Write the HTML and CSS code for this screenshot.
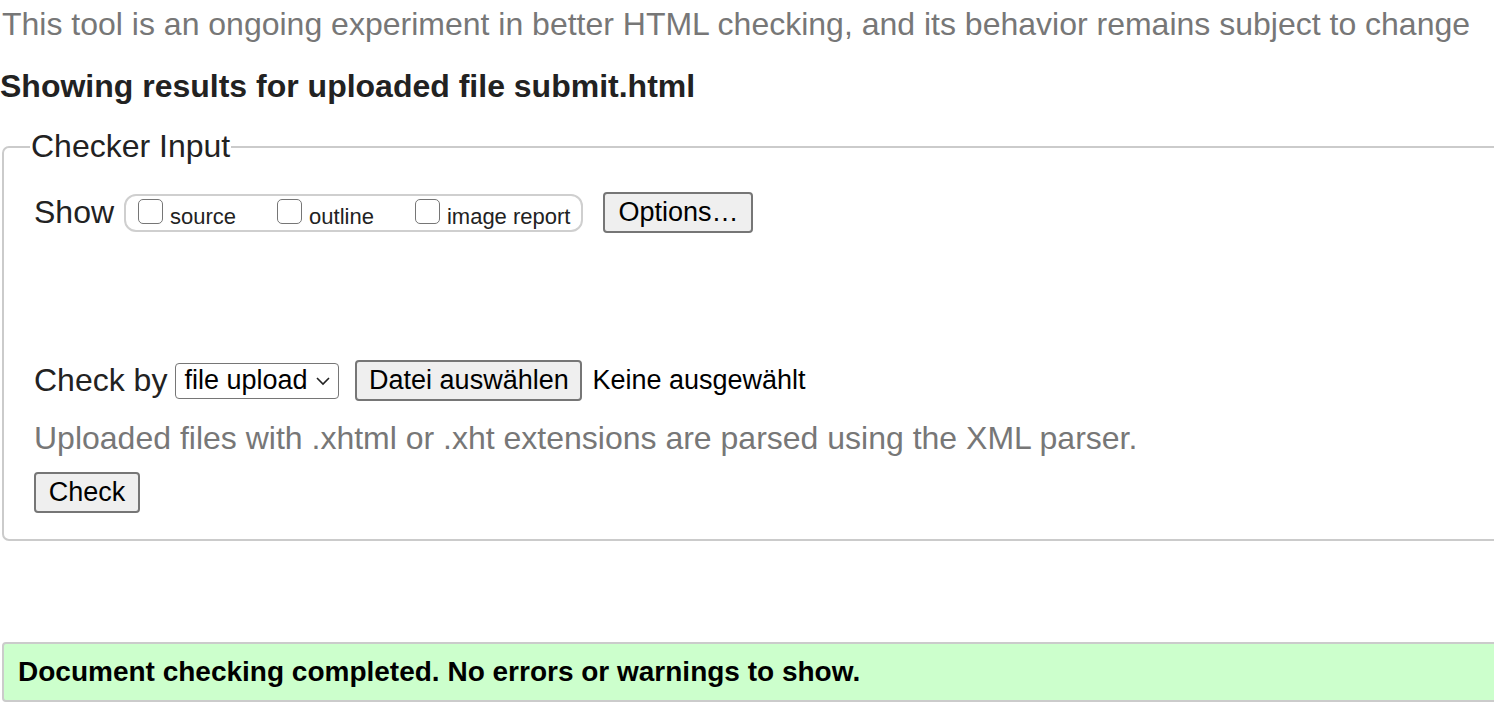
FILE: index.html
```html
<!DOCTYPE html>
<html lang="en">
<head>
<meta charset="utf-8">
<title>Nu Html Checker</title>
<link rel="stylesheet" href="styles.css">
</head>
<body>
<div class="page">
  <p class="notice">This tool is an ongoing experiment in better HTML checking, and its behavior remains subject to change</p>
  <h2 class="results">Showing results for uploaded file submit.html</h2>
  <fieldset class="checker">
    <legend class="legend">Checker Input</legend>
    <div class="show-row">
      <span class="row-label">Show</span>
      <div class="show-box">
        <label class="opt"><input type="checkbox" class="cb"><span>source</span></label>
        <label class="opt"><input type="checkbox" class="cb"><span>outline</span></label>
        <label class="opt"><input type="checkbox" class="cb"><span>image report</span></label>
      </div>
      <button class="btn btn-options" type="button">Options…</button>
    </div>
    <div class="check-row">
      <span class="row-label">Check by</span>
      <div class="select">
        <span>file upload</span>
        <svg class="chev" width="16" height="10" viewBox="0 0 16 10"><path d="M2 2 L8 8 L14 2" fill="none" stroke="#222" stroke-width="1.6"/></svg>
      </div>
      <button class="btn btn-file" type="button">Datei auswählen</button>
      <span class="nofile">Keine ausgewählt</span>
    </div>
    <p class="hint">Uploaded files with .xhtml or .xht extensions are parsed using the XML parser.</p>
    <button class="btn btn-check" type="button">Check</button>
  </fieldset>
  <div class="success">Document checking completed. No errors or warnings to show.</div>
</div>
</body>
</html>
```
FILE: styles.css
```css
html, body {
  margin: 0;
  padding: 0;
  background: #fff;
  overflow: hidden;
}
body {
  font-family: "Liberation Sans", Arial, sans-serif;
  color: #222;
}
.page {
  width: 1520px;
  padding: 0 0 0 2px;
}
.notice {
  margin: 0;
  padding-top: 6px;
  font-size: 32px;
  line-height: 37px;
  color: #777;
  white-space: nowrap;
}
.results {
  margin: 25px 0 0 -2px;
  font-size: 32px;
  line-height: 37px;
  font-weight: bold;
  color: #222;
}
.checker {
  margin: 23px 0 0 0;
  padding: 0 0 26px 30px;
  border: 2px solid #cbcbcb;
  border-radius: 7px;
  min-width: 0;
}
.legend {
  font-size: 32px;
  line-height: 37px;
  padding: 0 1px;
  margin-left: -4px;
  color: #222;
}
.show-row {
  display: flex;
  align-items: center;
  height: 41px;
  margin-top: 27px;
}
.row-label {
  font-size: 32px;
  line-height: 37px;
  color: #222;
}
.show-box {
  display: flex;
  align-items: center;
  margin-left: 10px;
  height: 38px;
  box-sizing: border-box;
  padding: 0 11px 0 12px;
  border: 2px solid #cfcfcf;
  border-radius: 12px;
  gap: 41px;
}
.opt {
  display: flex;
  align-items: flex-end;
  font-size: 22px;
  line-height: 26px;
  color: #222;
}
.opt span {
  position: relative;
  top: 4px;
}
.cb {
  -webkit-appearance: none;
  appearance: none;
  width: 25px;
  height: 25px;
  margin: 0 7px 0 0;
  border: 1.5px solid #767676;
  border-radius: 5px;
  background: #fff;
  position: relative;
  top: -2px;
}
.btn {
  font-family: "Liberation Sans", Arial, sans-serif;
  font-size: 27px;
  color: #000;
  background: #efefef;
  border: 2px solid #767676;
  border-radius: 4px;
  padding: 0 13px;
  height: 41px;
  box-sizing: border-box;
}
.btn-options {
  margin-left: 20px;
  width: 150px;
  padding: 0;
}
.check-row {
  display: flex;
  align-items: center;
  margin-top: 127px;
  height: 41px;
}
.select {
  display: flex;
  align-items: center;
  margin-left: 8px;
  height: 36px;
  width: 164px;
  box-sizing: border-box;
  border: 1.5px solid #767676;
  border-radius: 4px;
  padding: 0 7px 0 8px;
  font-size: 27px;
  color: #000;
  justify-content: space-between;
}
.btn-file {
  margin-left: 16px;
  width: 227px;
  padding: 0;
}
.nofile {
  margin-left: 10px;
  font-size: 27px;
  color: #000;
}
.hint {
  margin: 19px 0 0 0;
  font-size: 32px;
  line-height: 37px;
  color: #777;
}
.btn-check {
  display: block;
  margin-top: 15px;
  width: 106px;
  padding: 0;
}
.success {
  margin-top: 101px;
  height: 60px;
  box-sizing: border-box;
  border: 2px solid #cbcbcb;
  border-radius: 4px;
  background: #ccffcc;
  padding-left: 14px;
  display: flex;
  align-items: center;
  font-size: 28px;
  font-weight: bold;
  color: #000;
}
```
